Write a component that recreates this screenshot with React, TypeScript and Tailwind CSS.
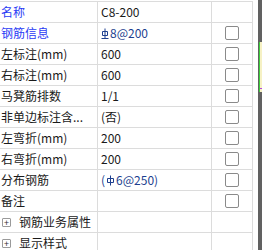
import React from 'react';

type Row = {
  label: string;
  value?: React.ReactNode;
  blue?: boolean;
  check?: boolean;
  group?: boolean;
};

// HRB400 bar symbol (C grade)
const SteelC = () => (
  <svg width="8" height="11" viewBox="0 0 8 11" className="inline-block mr-px -mt-[2px] align-middle">
    <path d="M4 0.5V10.5M1.5 3.5H6.5V7.5H1.5Z M0.5 10.5H7.5" stroke="#1d3f8f" strokeWidth="1" fill="none" />
  </svg>
);

// HPB300 bar symbol (A grade)
const SteelA = () => (
  <svg width="9" height="11" viewBox="0 0 9 11" className="inline-block mx-px -mt-[2px] align-middle">
    <path d="M4.5 0.5V10.5M1.5 3.5H7.5V7.5H1.5Z" stroke="#1d3f8f" strokeWidth="1" fill="none" />
  </svg>
);

const rows: Row[] = [
  { label: '名称', value: 'C8-200', blue: true },
  {
    label: '钢筋信息',
    blue: true,
    check: true,
    value: (
      <span className="text-[#1d3f8f]">
        <SteelC />8@200
      </span>
    ),
  },
  { label: '左标注(mm)', value: '600', check: true },
  { label: '右标注(mm)', value: '600', check: true },
  { label: '马凳筋排数', value: '1/1', check: true },
  { label: '非单边标注含...', value: '(否)', check: true },
  { label: '左弯折(mm)', value: '200', check: true },
  { label: '右弯折(mm)', value: '200', check: true },
  {
    label: '分布钢筋',
    check: true,
    value: (
      <span className="text-[#1d3f8f]">
        (<SteelA />6@250)
      </span>
    ),
  },
  { label: '备注', check: true },
  { label: '钢筋业务属性', group: true },
  { label: '显示样式', group: true },
];

export default function App() {
  return (
    <div
      className="relative w-[262px] h-[250px] overflow-hidden bg-white flex text-[12px] leading-none text-[#1a1a1a]"
      style={{ fontFamily: '"Noto Sans CJK SC", "Liberation Sans", sans-serif' }}
    >
      {/* property grid */}
      <div className="w-[253px] mt-px border-t border-[#dcdcdc] shrink-0">
        {rows.map((r, i) => (
          <div key={i} className="flex h-[21px] border-b border-[#dcdcdc]">
            <div className="w-[98px] border-r border-[#dcdcdc] flex items-center pl-px whitespace-nowrap overflow-hidden">
              {r.group ? (
                <>
                  <span className="ml-px w-[9px] h-[9px] border border-[#9a9a9a] rounded-[1px] flex items-center justify-center text-[9px] leading-none text-[#333] mr-[8px]">
                    +
                  </span>
                  <span>{r.label}</span>
                </>
              ) : (
                <span className={r.blue ? 'text-[#2a3cf5]' : ''}>{r.label}</span>
              )}
            </div>
            <div className="w-[114px] border-r border-[#dcdcdc] flex items-center pl-[3px] whitespace-nowrap overflow-hidden">
              {r.value}
            </div>
            <div className="w-[41px] border-r border-[#dcdcdc] flex items-center justify-center">
              {r.check && <span className="w-[14px] h-[14px] border border-[#8a8a8a] rounded-[2px] bg-white" />}
            </div>
          </div>
        ))}
      </div>

      <div className="w-[5px] shrink-0" />
      <div className="w-[4px] h-full bg-[#616161] shrink-0" />

      {/* bit of the window behind */}
      <div className="absolute left-[259px] top-[42px] w-[3px] h-[50px] bg-[#f6f1c4] border-l border-[#3ccf3c]" />
      <div className="absolute left-[260px] top-[88px] w-[2px] h-[4px] border-t border-[#b04ad8]" />
    </div>
  );
}
